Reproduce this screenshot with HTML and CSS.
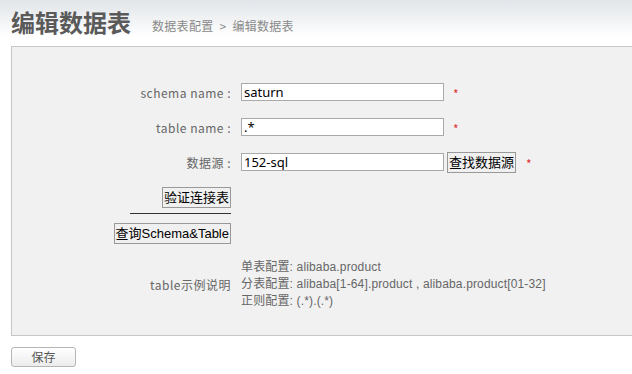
FILE: index.html
```html
<!DOCTYPE html>
<html lang="zh-CN">
<head>
    <meta charset="UTF-8">
    <title>编辑数据表</title>
    <link rel="stylesheet" href="styles.css">
</head>
<body>
    <div class="page-header">
        <h1>编辑数据表</h1>
        <span class="crumb">数据表配置 &nbsp;&gt;&nbsp; 编辑数据表</span>
    </div>

    <div class="panel">
        <div class="row">
            <label class="label">schema name :</label>
            <input class="text" type="text" value="saturn">
            <span class="req">*</span>
        </div>
        <div class="row">
            <label class="label">table name :</label>
            <input class="text" type="text" value=".*">
            <span class="req">*</span>
        </div>
        <div class="row">
            <label class="label">数据源 :</label>
            <input class="text" type="text" value="152-sql">
            <button class="btn">查找数据源</button>
            <span class="req req-near">*</span>
        </div>
        <div class="actions">
            <button class="btn">验证连接表</button>
            <div class="sep"></div>
            <button class="btn">查询Schema&amp;Table</button>
        </div>
        <div class="row row-help">
            <label class="label">table示例说明</label>
            <div class="help">
                <div>单表配置: alibaba.product</div>
                <div>分表配置: alibaba[1-64].product , alibaba.product[01-32]</div>
                <div>正则配置: (.*).(.*)</div>
            </div>
        </div>
    </div>

    <div class="footer">
        <button class="save">保存</button>
    </div>
</body>
</html>
```

FILE: styles.css
```css
body {
    margin: 0;
    background-color: #fff;
    font-family: "Noto Sans CJK SC", "Liberation Sans", sans-serif;
    font-size: 12px;
    color: #555;
}

.page-header {
    height: 46px;
    padding-left: 11px;
    display: flex;
    align-items: center;
    background: linear-gradient(to bottom, #e1e5e9 0%, #eef0f2 35%, #fff 80%);
}

.page-header h1 {
    margin: -3px 0 0;
    font-size: 24px;
    font-weight: bold;
    color: #5a5a5a;
}

.crumb {
    margin-left: 21px;
    margin-top: 4px;
    font-size: 12px;
    color: #8a8a8a;
    letter-spacing: 0.3px;
}

.panel {
    margin-left: 11px;
    margin-right: -4px;
    height: 290px;
    padding-top: 35px;
    box-sizing: border-box;
    background-color: #f1f1f1;
    border: 1px solid #c6c6c6;
}

.row {
    display: flex;
    align-items: center;
    height: 20px;
    margin-bottom: 15px;
}

.row + .row {
    margin-top: 0;
}

.label {
    width: 219px;
    padding-right: 10px;
    text-align: right;
    color: #666;
    font-size: 12px;
    letter-spacing: 0.5px;
}

.text {
    width: 197px;
    height: 14px;
    padding: 1px 2px;
    border: 1px solid #aaa;
    font-family: "Noto Sans", "Liberation Sans", sans-serif;
    font-size: 13px;
    color: #000;
    background: #fff;
}

.req {
    margin-left: 9px;
    margin-top: 2px;
    color: #e03030;
    font-size: 12px;
}

.req-near {
    margin-left: 10px;
}

.btn {
    margin: 0 0 0 3px;
    padding: 0 1px;
    height: 21px;
    border: 1px solid #999;
    background-color: #f0f0f0;
    font-family: "Liberation Sans", "Noto Sans CJK SC", sans-serif;
    font-size: 13px;
    line-height: 17px;
    color: #000;
}

.actions {
    width: 219px;
    display: flex;
    flex-direction: column;
    align-items: flex-end;
    margin-top: 1px;
}

.actions .btn {
    margin: 0;
}

.sep {
    width: 101px;
    height: 1px;
    margin: 5px 0 9px;
    background-color: #333;
}

.row-help {
    height: auto;
    margin-top: 15px;
    align-items: center;
}

.help {
    line-height: 17px;
    color: #666;
    font-family: "Liberation Sans", "Noto Sans CJK SC", sans-serif;
    font-size: 12px;
    letter-spacing: 0.15px;
}

.footer {
    padding: 11px 0 0 11px;
}

.save {
    width: 65px;
    height: 20px;
    padding: 0;
    border: 1px solid #b5b5b5;
    border-radius: 3px;
    background: linear-gradient(to bottom, #fff, #ececec);
    font-family: "Noto Sans CJK SC", sans-serif;
    font-size: 12px;
    color: #555;
    line-height: 16px;
}
```
